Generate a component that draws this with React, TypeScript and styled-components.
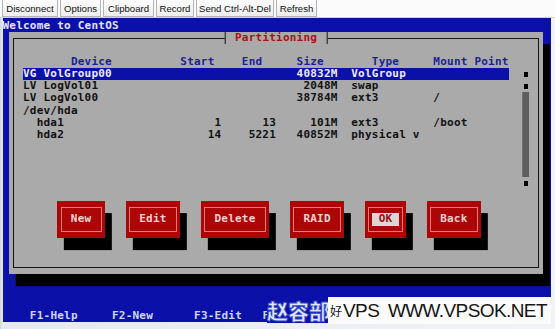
import React from "react";
import styled, { createGlobalStyle } from "styled-components";

const CW = 6.84;
const RH = 12.1;
const c = (n: number) => `${(n * CW).toFixed(2)}px`;
const r = (n: number) => `${(n * RH).toFixed(2)}px`;

const Global = createGlobalStyle`
  html, body { margin: 0; padding: 0; background: #f4f4f4; }
  body { width: 555px; height: 329px; overflow: hidden; font-family: "Liberation Sans", Arial, sans-serif; }
`;

const Page = styled.div`
  width: 555px;
  height: 329px;
  display: flex;
  flex-direction: column;
  position: relative;
  overflow: hidden;
`;

const Toolbar = styled.div`
  height: 18px;
  box-sizing: border-box;
  display: flex;
  align-items: flex-start;
  gap: 2px;
  padding-left: 2px;
  background: #fbfbfb;
  border-bottom: 1px solid #d0d0d0;
`;

const ToolButton = styled.div<{ $w: number }>`
  width: ${(p) => p.$w}px;
  height: 17px;
  box-sizing: border-box;
  border: 1px solid #b4b4b4;
  border-top: none;
  background: linear-gradient(#fdfdfd, #ededed);
  display: flex;
  align-items: center;
  justify-content: center;
  font-size: 9.6px;
  color: #111;
  white-space: nowrap;
`;

const Frame = styled.div`
  flex: 1;
  display: flex;
  align-items: flex-start;
  padding-left: 2.5px;
  background: linear-gradient(90deg, #c9d3e6, #e4e8f0 2px, #f2f3f6);
`;

const Screen = styled.div`
  width: calc(${c(80)} + 1.5px);
  height: ${r(25)};
  padding-top: 1.9px;
  background: #0b10a9;
  display: flex;
  flex-direction: column;
  font-family: "DejaVu Sans Mono", "Liberation Mono", monospace;
  font-weight: bold;
  font-size: 11px;
  letter-spacing: 0.22px;
  line-height: ${RH}px;
  white-space: pre;
`;

const TitleLine = styled.div`
  height: ${RH}px;
  color: #e4e4ff;
`;

const Dialog = styled.div`
  position: relative;
  margin-left: ${c(1)};
  width: ${c(78)};
  height: ${r(20)};
  background: #aaaaaa;
  box-shadow: ${c(1)} ${r(1)} 0 #000;
  display: flex;
  flex-direction: column;
  padding: ${r(2)} 0 0 ${c(2)};
  box-sizing: border-box;
  &::before {
    content: "";
    position: absolute;
    left: ${c(0.5)};
    right: ${c(0.5)};
    top: ${r(0.5)};
    bottom: ${r(0.5)};
    border: 1px solid #151515;
    pointer-events: none;
  }
`;

const DialogTitle = styled.div`
  position: absolute;
  top: 0;
  left: 50%;
  transform: translateX(-50%);
  width: ${c(15)};
  height: ${RH}px;
  box-sizing: border-box;
  background: #aaaaaa;
  border-left: 1px solid #151515;
  border-right: 1px solid #151515;
  color: #a81212;
  text-align: center;
  z-index: 1;
`;

const COLS = `${c(22)} ${c(7)} ${c(8)} ${c(9)} ${c(14)} ${c(11)}`;

const TableRow = styled.div<{ $selected?: boolean; $header?: boolean }>`
  display: grid;
  grid-template-columns: ${COLS};
  height: ${RH}px;
  background: ${(p) => (p.$selected ? "#0b10a9" : "transparent")};
  color: ${(p) => (p.$header ? "#1a1f95" : p.$selected ? "#ececff" : "#111")};
`;

const Cell = styled.span<{ $align?: "left" | "right"; $pl?: number; $pr?: number }>`
  text-align: ${(p) => p.$align || "left"};
  padding-left: ${(p) => c(p.$pl || 0)};
  padding-right: ${(p) => c(p.$pr || 0)};
  overflow: hidden;
`;

const ListArea = styled.div`
  display: flex;
  height: ${r(10)};
`;

const List = styled.div`
  width: ${c(71)};
  display: flex;
  flex-direction: column;
`;

const Scrollbar = styled.div`
  margin-left: ${c(2)};
  width: ${c(1)};
  display: flex;
  flex-direction: column;
`;

const ScrollArrow = styled.div`
  height: ${RH}px;
  display: flex;
  align-items: center;
  justify-content: center;
  &::after {
    content: "";
    width: 4px;
    height: 5px;
    background: #000;
  }
`;

const ScrollTrack = styled.div`
  height: ${r(7)};
  background: #5e5e5e;
  border-left: 1px solid #727272;
  box-sizing: border-box;
`;

const ButtonRow = styled.div`
  display: flex;
  gap: ${c(3)};
  margin-top: ${r(1)};
  padding-left: ${c(5)};
`;

const TuiButton = styled.div<{ $len: number }>`
  position: relative;
  width: ${(p) => c(p.$len + 4)};
  height: ${r(3)};
  background: #ac0606;
  box-shadow: ${c(1)} ${r(1)} 0 #000;
  display: flex;
  align-items: center;
  justify-content: center;
  &::before {
    content: "";
    position: absolute;
    left: ${c(0.5)};
    right: ${c(0.5)};
    top: ${r(0.5)};
    bottom: ${r(0.5)};
    border: 1px solid #e87a7a;
  }
`;

const ButtonLabel = styled.span<{ $focused?: boolean }>`
  position: relative;
  padding: 0 ${c(1)};
  height: ${RH}px;
  background: ${(p) => (p.$focused ? "#ddd6d6" : "transparent")};
  color: ${(p) => (p.$focused ? "#a00808" : "#f6d2d2")};
`;

const Footer = styled.div`
  margin-top: ${r(3)};
  height: ${RH}px;
  color: #cfd4ff;
`;

const WatermarkCjk = styled.div`
  position: absolute;
  left: 267px;
  top: 297px;
  width: 62px;
  height: 26px;
  overflow: hidden;
  background: #0b10a9;
  font-family: "Noto Sans CJK SC", sans-serif;
  font-weight: 900;
  font-size: 21px;
  line-height: 26px;
  color: #dfe6ff;
  -webkit-text-stroke: 0.8px #3546c8;
  white-space: nowrap;
`;

const WatermarkBox = styled.div`
  position: absolute;
  left: 328px;
  top: 297px;
  width: 223px;
  height: 27px;
  background: #fbfbfb;
  display: flex;
  align-items: center;
  gap: 1px;
  font-family: "Liberation Sans", Arial, sans-serif;
  color: #151515;
  white-space: nowrap;
`;

const WmSmall = styled.span`
  font-family: "Noto Sans CJK SC", sans-serif;
  font-size: 12px;
  margin-left: 2px;
`;

const WmText = styled.span`
  font-size: 19px;
  letter-spacing: -0.6px;
  word-spacing: 4px;
`;

const toolButtons: [string, number][] = [
  ["Disconnect", 56],
  ["Options", 41],
  ["Clipboard", 51],
  ["Record", 38],
  ["Send Ctrl-Alt-Del", 78],
  ["Refresh", 41],
];

type Row = { dev: string; start?: string; end?: string; size?: string; type?: string; mount?: string; sel?: boolean };

const rows: Row[] = [
  { dev: "VG VolGroup00", size: "40832M", type: "VolGroup", sel: true },
  { dev: "LV LogVol01", size: "2048M", type: "swap" },
  { dev: "LV LogVol00", size: "38784M", type: "ext3", mount: "/" },
  { dev: "/dev/hda" },
  { dev: "  hda1", start: "1", end: "13", size: "101M", type: "ext3", mount: "/boot" },
  { dev: "  hda2", start: "14", end: "5221", size: "40852M", type: "physical v" },
];

const buttons = ["New", "Edit", "Delete", "RAID", "OK", "Back"];

export default function App() {
  return (
    <Page>
      <Global />
      <Toolbar>
        {toolButtons.map(([t, w]) => (
          <ToolButton key={t} $w={w}>
            {t}
          </ToolButton>
        ))}
      </Toolbar>
      <Frame>
        <Screen>
          <TitleLine>Welcome to CentOS</TitleLine>
          <Dialog>
            <DialogTitle>Partitioning</DialogTitle>
            <TableRow $header>
              <Cell $pl={7}>Device</Cell>
              <Cell $align="right" $pr={1}>Start</Cell>
              <Cell $align="right" $pr={2}>End</Cell>
              <Cell $align="right" $pr={2}>Size</Cell>
              <Cell $pl={5}>Type</Cell>
              <Cell>Mount Point</Cell>
            </TableRow>
            <ListArea>
              <List>
                {rows.map((row, i) => (
                  <TableRow key={i} $selected={row.sel}>
                    <Cell>{row.dev}</Cell>
                    <Cell $align="right">{row.start || ""}</Cell>
                    <Cell $align="right">{row.end || ""}</Cell>
                    <Cell $align="right">{row.size || ""}</Cell>
                    <Cell $pl={2}>{row.type || ""}</Cell>
                    <Cell>{row.mount || ""}</Cell>
                  </TableRow>
                ))}
              </List>
              <Scrollbar>
                <ScrollArrow />
                <ScrollArrow />
                <ScrollTrack />
                <ScrollArrow />
              </Scrollbar>
            </ListArea>
            <ButtonRow>
              {buttons.map((b) => (
                <TuiButton key={b} $len={b.length}>
                  <ButtonLabel $focused={b === "OK"}>{b}</ButtonLabel>
                </TuiButton>
              ))}
            </ButtonRow>
          </Dialog>
          <Footer>{"    F1-Help     F2-New      F3-Edit   F4-Delete    F5-Reset    F12-OK"}</Footer>
        </Screen>
      </Frame>
      <WatermarkCjk>赵容部</WatermarkCjk>
      <WatermarkBox>
        <WmSmall>好</WmSmall>
        <WmText>VPS WWW.VPSOK.NET</WmText>
      </WatermarkBox>
    </Page>
  );
}
